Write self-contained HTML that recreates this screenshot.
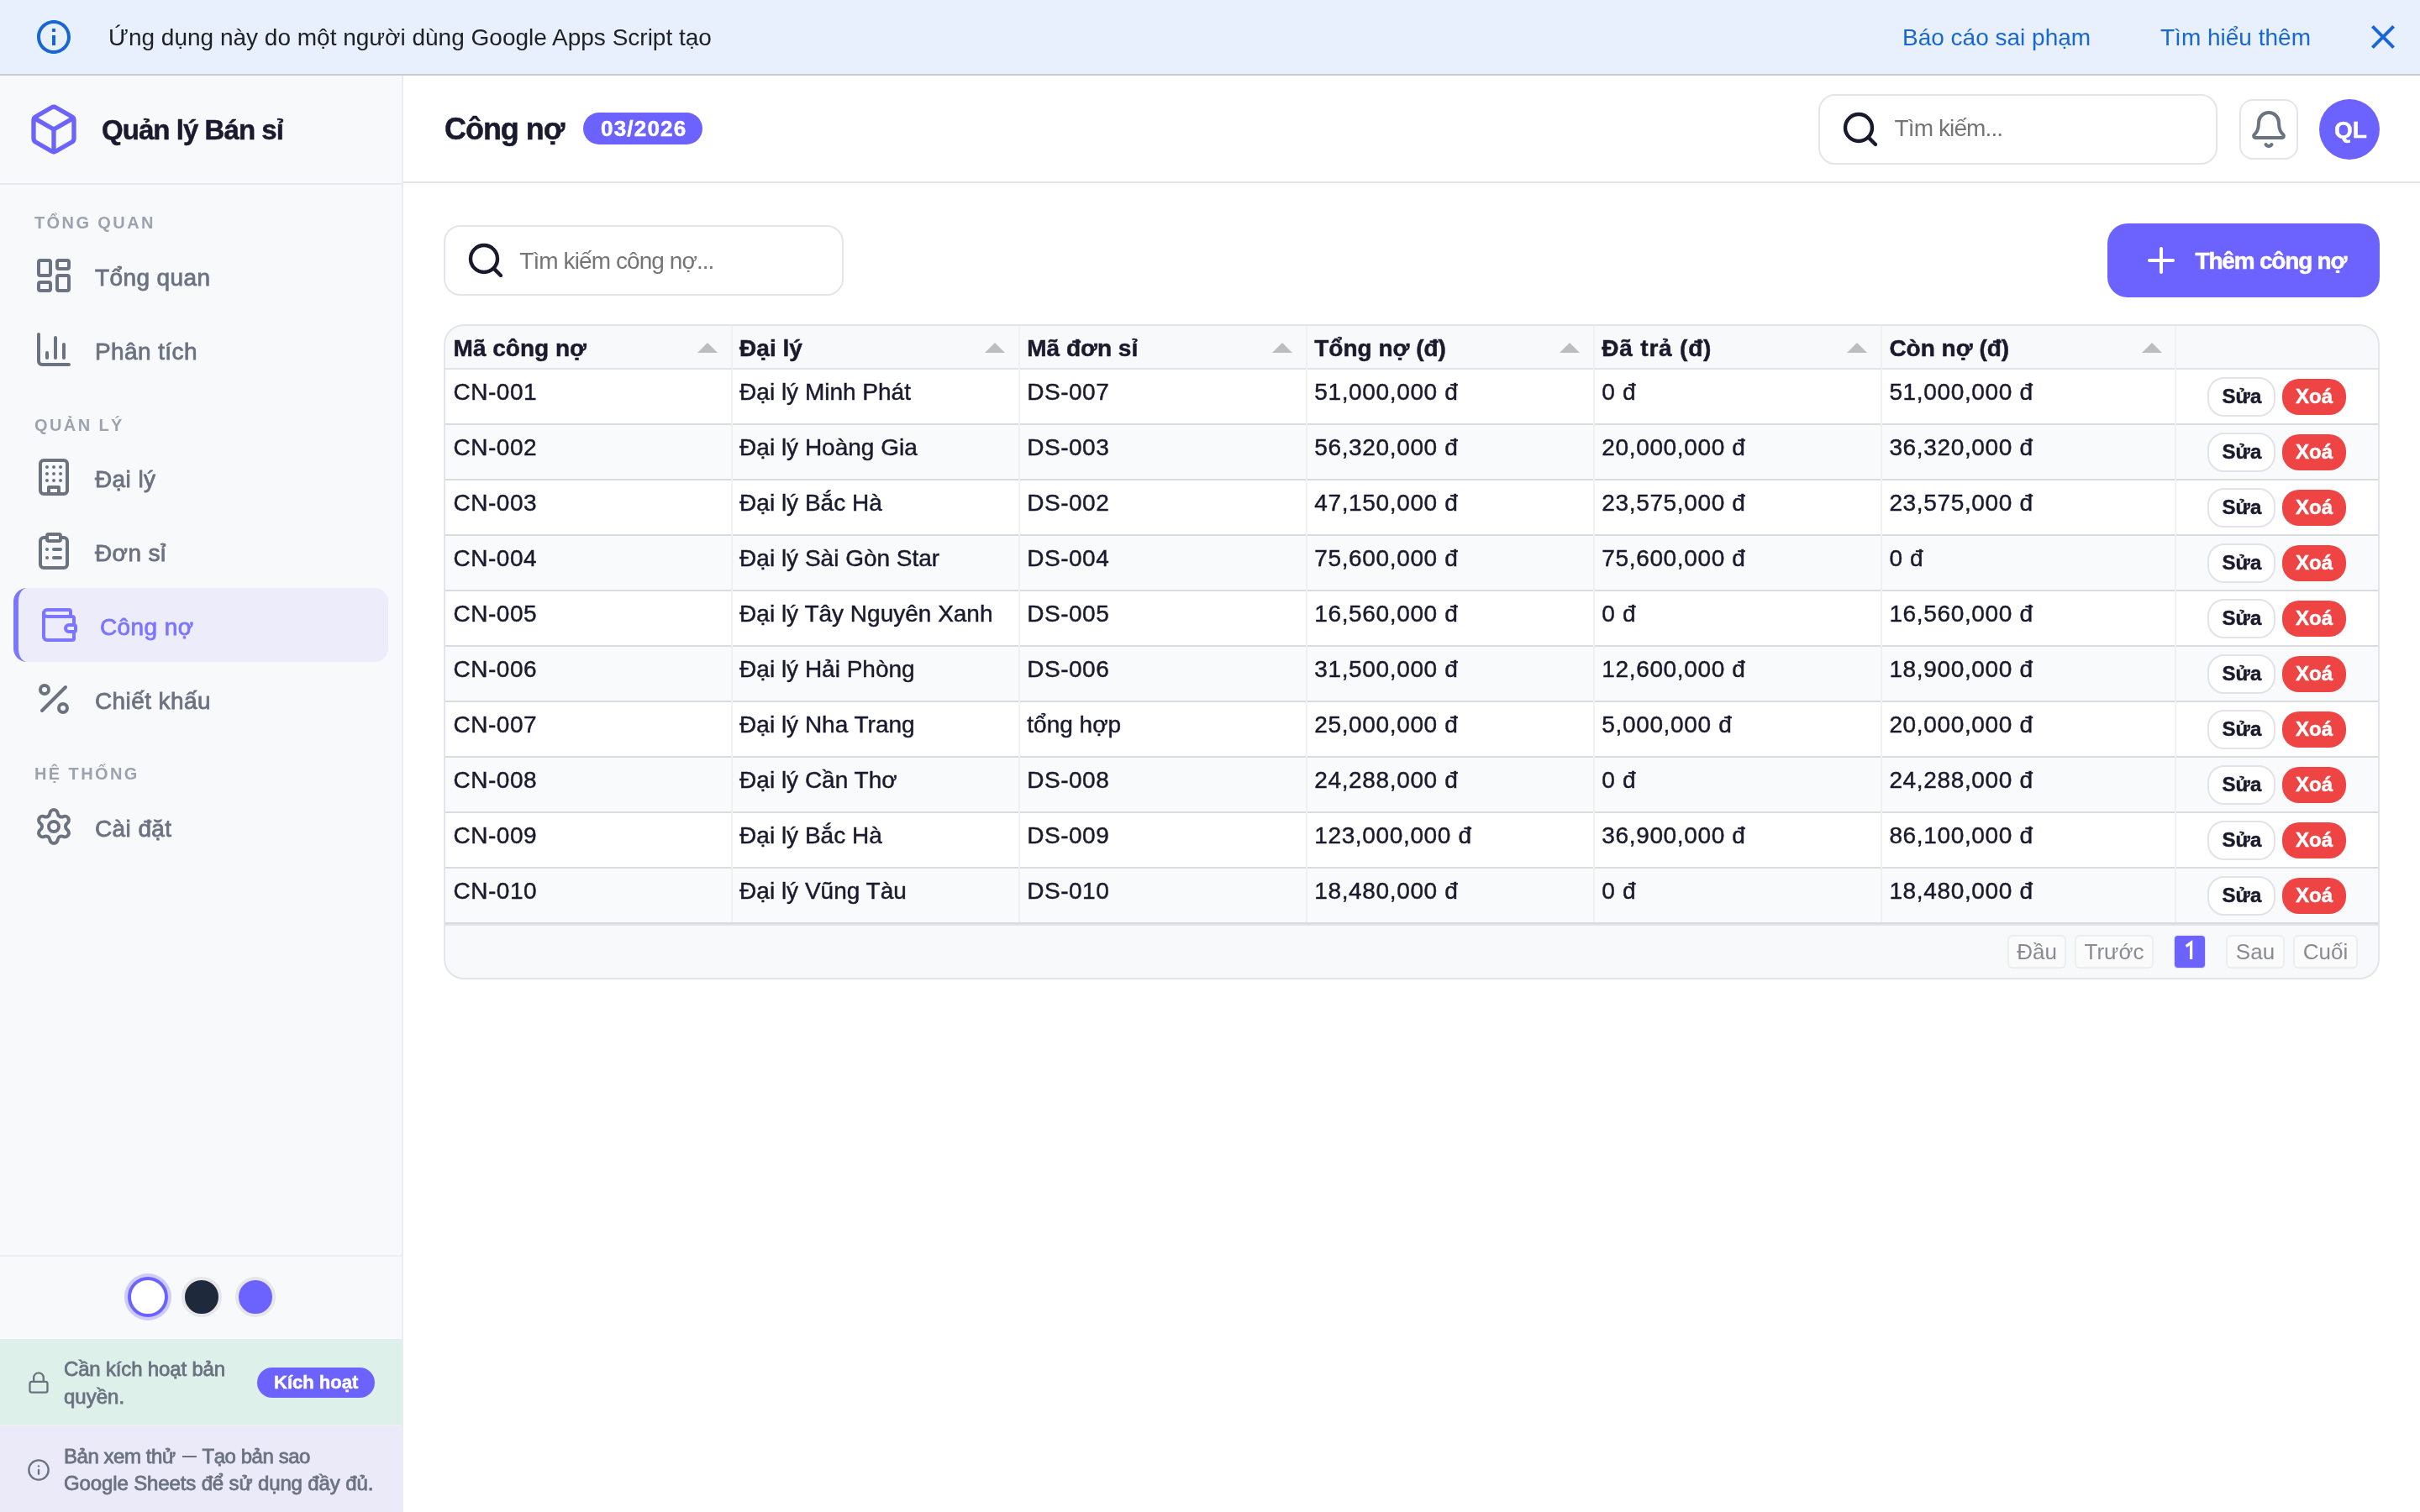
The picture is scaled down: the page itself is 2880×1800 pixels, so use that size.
<!DOCTYPE html>
<html><head><meta charset="utf-8"><title>Công nợ</title>
<style>
html,body{margin:0;padding:0;}
body{width:2880px;height:1800px;overflow:hidden;position:relative;background:#fff;font-family:"Liberation Sans",sans-serif;}
.t{position:absolute;white-space:nowrap;line-height:1;}
svg{display:block;}
#root{position:absolute;left:0;top:0;width:2880px;height:1800px;will-change:transform;}
</style></head><body><div id="root">
<div style="position:absolute;left:0px;top:0px;width:2880px;height:88px;background:#e8f0fe;border-bottom:2px solid #c9cbd0;"></div>
<svg style="position:absolute;left:40px;top:20px;" width="48" height="48" viewBox="0 0 24 24" fill="#1967d2" stroke="none" stroke-width="2" stroke-linecap="round" stroke-linejoin="round"><path d="M11 7h2v2h-2zm0 4h2v6h-2zm1-9C6.48 2 2 6.48 2 12s4.48 10 10 10 10-4.48 10-10S17.52 2 12 2zm0 18c-4.41 0-8-3.59-8-8s3.59-8 8-8 8 3.59 8 8-3.59 8-8 8z"/></svg>
<div class="t " style="left:129px;top:30.80px;font-size:28px;color:#202124;font-weight:400;letter-spacing:0px;">Ứng dụng này do một người dùng Google Apps Script tạo</div>
<div class="t " style="left:2264px;top:30.80px;font-size:28px;color:#1967d2;font-weight:400;letter-spacing:0px;">Báo cáo sai phạm</div>
<div class="t " style="left:2571px;top:30.80px;font-size:28px;color:#1967d2;font-weight:400;letter-spacing:0px;">Tìm hiểu thêm</div>
<svg style="position:absolute;left:2812px;top:20px;" width="48" height="48" viewBox="0 0 24 24" fill="#1967d2" stroke="none" stroke-width="2" stroke-linecap="round" stroke-linejoin="round"><path d="M19 6.41L17.59 5 12 10.59 6.41 5 5 6.41 10.59 12 5 17.59 6.41 19 12 13.41 17.59 19 19 17.59 13.41 12z"/></svg>
<div style="position:absolute;left:0px;top:90px;width:478px;height:1710px;background:#f8f9fb;border-right:2px solid #ebecf0;"></div>
<div style="position:absolute;left:0px;top:218px;width:478px;height:2px;background:#e8e9ee;"></div>
<svg style="position:absolute;left:32px;top:122px;" width="64" height="64" viewBox="0 0 24 24" fill="none" stroke="#6c63ff" stroke-width="2" stroke-linecap="round" stroke-linejoin="round"><path d="M21 8a2 2 0 0 0-1-1.73l-7-4a2 2 0 0 0-2 0l-7 4A2 2 0 0 0 3 8v8a2 2 0 0 0 1 1.73l7 4a2 2 0 0 0 2 0l7-4A2 2 0 0 0 21 16Z"/><path d="m3.3 7 8.7 5 8.7-5"/><path d="M12 22V12"/></svg>
<div class="t " style="left:121px;top:138.27px;font-size:33px;color:#1a1a2e;font-weight:700;letter-spacing:-0.95px;-webkit-text-stroke:0.5px currentColor;">Quản lý Bán sỉ</div>
<div class="t " style="left:41px;top:255.07px;font-size:20px;color:#9ca3af;font-weight:700;letter-spacing:2.4px;">TỔNG QUAN</div>
<svg style="position:absolute;left:40px;top:304px;" width="48" height="48" viewBox="0 0 24 24" fill="none" stroke="#6b7280" stroke-width="2" stroke-linecap="round" stroke-linejoin="round"><rect width="7" height="9" x="3" y="3" rx="1"/><rect width="7" height="5" x="14" y="3" rx="1"/><rect width="7" height="9" x="14" y="12" rx="1"/><rect width="7" height="5" x="3" y="16" rx="1"/></svg>
<div class="t " style="left:113px;top:316.80px;font-size:28px;color:#6b7280;font-weight:400;letter-spacing:0.4px;-webkit-text-stroke:0.8px currentColor;">Tổng quan</div>
<svg style="position:absolute;left:40px;top:392px;" width="48" height="48" viewBox="0 0 24 24" fill="none" stroke="#6b7280" stroke-width="2" stroke-linecap="round" stroke-linejoin="round"><path d="M3 3v16a2 2 0 0 0 2 2h16"/><path d="M18 17V9"/><path d="M13 17V5"/><path d="M8 17v-3"/></svg>
<div class="t " style="left:113px;top:404.80px;font-size:28px;color:#6b7280;font-weight:400;letter-spacing:0.4px;-webkit-text-stroke:0.8px currentColor;">Phân tích</div>
<div class="t " style="left:41px;top:495.67px;font-size:20px;color:#9ca3af;font-weight:700;letter-spacing:2.4px;">QUẢN LÝ</div>
<svg style="position:absolute;left:40px;top:544px;" width="48" height="48" viewBox="0 0 24 24" fill="none" stroke="#6b7280" stroke-width="2" stroke-linecap="round" stroke-linejoin="round"><rect width="16" height="20" x="4" y="2" rx="2" ry="2"/><path d="M9 22v-4h6v4"/><path d="M8 6h.01"/><path d="M16 6h.01"/><path d="M12 6h.01"/><path d="M12 10h.01"/><path d="M12 14h.01"/><path d="M16 10h.01"/><path d="M16 14h.01"/><path d="M8 10h.01"/><path d="M8 14h.01"/></svg>
<div class="t " style="left:113px;top:556.80px;font-size:28px;color:#6b7280;font-weight:400;letter-spacing:0.4px;-webkit-text-stroke:0.8px currentColor;">Đại lý</div>
<svg style="position:absolute;left:40px;top:632px;" width="48" height="48" viewBox="0 0 24 24" fill="none" stroke="#6b7280" stroke-width="2" stroke-linecap="round" stroke-linejoin="round"><rect width="8" height="4" x="8" y="2" rx="1" ry="1"/><path d="M16 4h2a2 2 0 0 1 2 2v14a2 2 0 0 1-2 2H6a2 2 0 0 1-2-2V6a2 2 0 0 1 2-2h2"/><path d="M12 11h4"/><path d="M12 16h4"/><path d="M8 11h.01"/><path d="M8 16h.01"/></svg>
<div class="t " style="left:113px;top:644.80px;font-size:28px;color:#6b7280;font-weight:400;letter-spacing:0.4px;-webkit-text-stroke:0.8px currentColor;">Đơn sỉ</div>
<div style="position:absolute;left:16px;top:700px;width:446px;height:88px;box-sizing:border-box;background:#edecfb;border-left:6px solid #7c77ff;border-radius:16px;"></div>
<svg style="position:absolute;left:46px;top:720px;" width="48" height="48" viewBox="0 0 24 24" fill="none" stroke="#7b75ff" stroke-width="2" stroke-linecap="round" stroke-linejoin="round"><path d="M19 7V4a1 1 0 0 0-1-1H5a2 2 0 0 0 0 4h15a1 1 0 0 1 1 1v4h-3a2 2 0 0 0 0 4h3a1 1 0 0 0 1-1v-2a1 1 0 0 0-1-1"/><path d="M3 5v14a2 2 0 0 0 2 2h15a1 1 0 0 0 1-1v-4"/></svg>
<div class="t " style="left:119px;top:732.80px;font-size:28px;color:#7b75ff;font-weight:400;letter-spacing:0.4px;-webkit-text-stroke:0.8px currentColor;">Công nợ</div>
<svg style="position:absolute;left:40px;top:808px;" width="48" height="48" viewBox="0 0 24 24" fill="none" stroke="#6b7280" stroke-width="2" stroke-linecap="round" stroke-linejoin="round"><line x1="19" x2="5" y1="5" y2="19"/><circle cx="6.5" cy="6.5" r="2.5"/><circle cx="17.5" cy="17.5" r="2.5"/></svg>
<div class="t " style="left:113px;top:820.80px;font-size:28px;color:#6b7280;font-weight:400;letter-spacing:0.4px;-webkit-text-stroke:0.8px currentColor;">Chiết khấu</div>
<div class="t " style="left:41px;top:911.07px;font-size:20px;color:#9ca3af;font-weight:700;letter-spacing:2.4px;">HỆ THỐNG</div>
<svg style="position:absolute;left:40px;top:960px;" width="48" height="48" viewBox="0 0 24 24" fill="none" stroke="#6b7280" stroke-width="2" stroke-linecap="round" stroke-linejoin="round"><path d="M9.671 4.136a2.34 2.34 0 0 1 4.659 0 2.34 2.34 0 0 0 3.319 1.915 2.34 2.34 0 0 1 2.33 4.033 2.34 2.34 0 0 0 0 3.831 2.34 2.34 0 0 1-2.33 4.033 2.34 2.34 0 0 0-3.319 1.915 2.34 2.34 0 0 1-4.659 0 2.34 2.34 0 0 0-3.32-1.915 2.34 2.34 0 0 1-2.33-4.033 2.34 2.34 0 0 0 0-3.831A2.34 2.34 0 0 1 6.35 6.051a2.34 2.34 0 0 0 3.319-1.915"/><circle cx="12" cy="12" r="3"/></svg>
<div class="t " style="left:113px;top:972.80px;font-size:28px;color:#6b7280;font-weight:400;letter-spacing:0.4px;-webkit-text-stroke:0.8px currentColor;">Cài đặt</div>
<div style="position:absolute;left:0px;top:1494px;width:478px;height:2px;background:#eceef2;"></div>
<div style="position:absolute;left:152px;top:1520px;width:40px;height:40px;border-radius:50%;background:#fff;border:4px solid #6c63ff;box-shadow:0 0 0 4px rgba(108,99,255,.3);"></div>
<div style="position:absolute;left:216px;top:1520px;width:40px;height:40px;border-radius:50%;background:#1e293b;border:4px solid #e5e7eb;"></div>
<div style="position:absolute;left:280px;top:1520px;width:40px;height:40px;border-radius:50%;background:#6c63ff;border:4px solid #e5e7eb;"></div>
<div style="position:absolute;left:0px;top:1594px;width:478px;height:102px;background:#ddf0ea;"></div>
<svg style="position:absolute;left:32px;top:1632px;" width="28" height="28" viewBox="0 0 24 24" fill="none" stroke="#6b7280" stroke-width="2" stroke-linecap="round" stroke-linejoin="round"><rect width="18" height="11" x="3" y="11" rx="2" ry="2"/><path d="M7 11V7a5 5 0 0 1 10 0v4"/></svg>
<div class="t " style="left:76px;top:1618.28px;font-size:24px;color:#6b7280;font-weight:400;letter-spacing:-0.17px;-webkit-text-stroke:0.8px currentColor;">Cần kích hoạt bản</div>
<div class="t " style="left:76px;top:1650.88px;font-size:24px;color:#6b7280;font-weight:400;letter-spacing:0px;-webkit-text-stroke:0.8px currentColor;">quyền.</div>
<div style="position:absolute;left:306px;top:1628px;width:140px;height:36px;border-radius:18px;background:#6c63ff;"></div>
<div class="t " style="left:326px;top:1635.18px;font-size:22px;color:#fff;font-weight:700;letter-spacing:0px;-webkit-text-stroke:0.5px currentColor;">Kích hoạt</div>
<div style="position:absolute;left:0px;top:1696px;width:478px;height:104px;background:#ebeaf8;"></div>
<div style="position:absolute;left:0px;top:1696px;width:478px;height:2px;background:#eff0f3;"></div>
<svg style="position:absolute;left:32px;top:1736px;" width="28" height="28" viewBox="0 0 24 24" fill="none" stroke="#6b7280" stroke-width="2" stroke-linecap="round" stroke-linejoin="round"><circle cx="12" cy="12" r="10"/><path d="M12 16v-4"/><path d="M12 8h.01"/></svg>
<div class="t " style="left:76px;top:1722.18px;font-size:24px;color:#6b7280;font-weight:400;letter-spacing:-0.45px;-webkit-text-stroke:0.8px currentColor;">Bản xem thử</div>
<div style="position:absolute;left:216.5px;top:1733.2px;width:17.5px;height:2.2px;background:#6b7280;"></div>
<div class="t " style="left:240.5px;top:1722.18px;font-size:24px;color:#6b7280;font-weight:400;letter-spacing:-0.45px;-webkit-text-stroke:0.8px currentColor;">Tạo bản sao</div>
<div class="t " style="left:76px;top:1753.88px;font-size:24px;color:#6b7280;font-weight:400;letter-spacing:-0.13px;-webkit-text-stroke:0.8px currentColor;">Google Sheets để sử dụng đầy đủ.</div>
<div style="position:absolute;left:480px;top:216px;width:2400px;height:2px;background:#e4e5ea;"></div>
<div class="t " style="left:529px;top:135.93px;font-size:36px;color:#1a1a2e;font-weight:700;letter-spacing:-1.05px;-webkit-text-stroke:0.5px currentColor;">Công nợ</div>
<div style="position:absolute;left:694px;top:134px;width:142px;height:38px;border-radius:19px;background:#6c63ff;"></div>
<div class="t " style="left:715px;top:140.29px;font-size:26px;color:#fff;font-weight:700;letter-spacing:1.2px;-webkit-text-stroke:0.5px currentColor;">03/2026</div>
<div style="position:absolute;left:2164px;top:112px;width:475px;height:84px;box-sizing:border-box;border:2px solid #e4e4ea;border-radius:20px;background:#fff;"></div>
<svg style="position:absolute;left:2190px;top:130px;" width="48" height="48" viewBox="0 0 24 24" fill="none" stroke="#1a1a2e" stroke-width="2.2" stroke-linecap="round" stroke-linejoin="round"><circle cx="11" cy="11" r="8"/><path d="m21 21-4.3-4.3"/></svg>
<div class="t " style="left:2254.6px;top:138.50px;font-size:28px;color:#757575;font-weight:400;letter-spacing:-0.9px;">Tìm kiếm...</div>
<div style="position:absolute;left:2665px;top:118px;width:70px;height:72px;box-sizing:border-box;border:2px solid #e4e4ea;border-radius:16px;background:#fff;"></div>
<svg style="position:absolute;left:2676px;top:130px;" width="48" height="48" viewBox="0 0 24 24" fill="none" stroke="#6b7280" stroke-width="2" stroke-linecap="round" stroke-linejoin="round"><path d="M10.268 21a2 2 0 0 0 3.464 0"/><path d="M3.262 15.326A1 1 0 0 0 4 17h16a1 1 0 0 0 .74-1.673C19.41 13.956 18 12.499 18 8A6 6 0 0 0 6 8c0 4.499-1.411 5.956-2.738 7.326"/></svg>
<div style="position:absolute;left:2760px;top:118px;width:72px;height:72px;border-radius:50%;background:#6c63ff;"></div>
<div class="t " style="left:2778px;top:140.50px;font-size:28px;color:#fff;font-weight:700;letter-spacing:0px;-webkit-text-stroke:0.5px currentColor;">QL</div>
<div style="position:absolute;left:528px;top:268px;width:476px;height:84px;box-sizing:border-box;border:2px solid #e4e4ea;border-radius:20px;background:#fff;"></div>
<svg style="position:absolute;left:554px;top:286px;" width="48" height="48" viewBox="0 0 24 24" fill="none" stroke="#1a1a2e" stroke-width="2.2" stroke-linecap="round" stroke-linejoin="round"><circle cx="11" cy="11" r="8"/><path d="m21 21-4.3-4.3"/></svg>
<div class="t " style="left:618.3px;top:296.60px;font-size:28px;color:#757575;font-weight:400;letter-spacing:-0.92px;">Tìm kiếm công nợ...</div>
<div style="position:absolute;left:2508px;top:266px;width:324px;height:88px;border-radius:24px;background:#6c63ff;"></div>
<svg style="position:absolute;left:2548px;top:286px;" width="48" height="48" viewBox="0 0 24 24" fill="none" stroke="#fff" stroke-width="2" stroke-linecap="round" stroke-linejoin="round"><path d="M5 12h14"/><path d="M12 5v14"/></svg>
<div class="t " style="left:2612.5px;top:296.50px;font-size:28px;color:#fff;font-weight:700;letter-spacing:-1.2px;-webkit-text-stroke:0.5px currentColor;">Thêm công nợ</div>
<div style="position:absolute;left:528px;top:386px;width:2304px;height:780px;box-sizing:border-box;border:2px solid #e4e5ea;border-radius:24px;background:#f8f9fb;overflow:hidden;">
<div style="position:absolute;left:0px;top:52px;width:2300px;height:64px;background:#ffffff;"></div>
<div style="position:absolute;left:0px;top:116px;width:2300px;height:2px;background:#dadbdd;"></div>
<div style="position:absolute;left:0px;top:118px;width:2300px;height:64px;background:#f9fafb;"></div>
<div style="position:absolute;left:0px;top:182px;width:2300px;height:2px;background:#dadbdd;"></div>
<div style="position:absolute;left:0px;top:184px;width:2300px;height:64px;background:#ffffff;"></div>
<div style="position:absolute;left:0px;top:248px;width:2300px;height:2px;background:#dadbdd;"></div>
<div style="position:absolute;left:0px;top:250px;width:2300px;height:64px;background:#f9fafb;"></div>
<div style="position:absolute;left:0px;top:314px;width:2300px;height:2px;background:#dadbdd;"></div>
<div style="position:absolute;left:0px;top:316px;width:2300px;height:64px;background:#ffffff;"></div>
<div style="position:absolute;left:0px;top:380px;width:2300px;height:2px;background:#dadbdd;"></div>
<div style="position:absolute;left:0px;top:382px;width:2300px;height:64px;background:#f9fafb;"></div>
<div style="position:absolute;left:0px;top:446px;width:2300px;height:2px;background:#dadbdd;"></div>
<div style="position:absolute;left:0px;top:448px;width:2300px;height:64px;background:#ffffff;"></div>
<div style="position:absolute;left:0px;top:512px;width:2300px;height:2px;background:#dadbdd;"></div>
<div style="position:absolute;left:0px;top:514px;width:2300px;height:64px;background:#f9fafb;"></div>
<div style="position:absolute;left:0px;top:578px;width:2300px;height:2px;background:#dadbdd;"></div>
<div style="position:absolute;left:0px;top:580px;width:2300px;height:64px;background:#ffffff;"></div>
<div style="position:absolute;left:0px;top:644px;width:2300px;height:2px;background:#dadbdd;"></div>
<div style="position:absolute;left:0px;top:646px;width:2300px;height:64px;background:#f9fafb;"></div>
<div style="position:absolute;left:0px;top:710px;width:2300px;height:2px;background:#dadbdd;"></div>
<div style="position:absolute;left:0px;top:49.5px;width:2300px;height:2px;background:#e2e3e8;"></div>
<div style="position:absolute;left:0px;top:712px;width:2300px;height:2px;background:#e2e3e8;"></div>
<div style="position:absolute;left:339.5px;top:0px;width:2px;height:710px;background:#f0f1f3;"></div>
<div style="position:absolute;left:681.7px;top:0px;width:2px;height:710px;background:#f0f1f3;"></div>
<div style="position:absolute;left:1023.5999999999999px;top:0px;width:2px;height:710px;background:#f0f1f3;"></div>
<div style="position:absolute;left:1365.7px;top:0px;width:2px;height:710px;background:#f0f1f3;"></div>
<div style="position:absolute;left:1707.8000000000002px;top:0px;width:2px;height:710px;background:#f0f1f3;"></div>
<div style="position:absolute;left:2058px;top:0px;width:2px;height:710px;background:#f0f1f3;"></div>
<div class="t" style="left:9.600000000000023px;top:12.60px;font-size:28px;color:#1a1a2e;font-weight:700;letter-spacing:0px;-webkit-text-stroke:0.5px currentColor;">Mã công nợ</div>
<div style="position:absolute;left:300.0px;top:20px;width:0;height:0;border-left:12px solid transparent;border-right:12px solid transparent;border-bottom:12px solid #bdbdbd;"></div>
<div class="t" style="left:350.1px;top:12.60px;font-size:28px;color:#1a1a2e;font-weight:700;letter-spacing:0px;-webkit-text-stroke:0.5px currentColor;">Đại lý</div>
<div style="position:absolute;left:642.2px;top:20px;width:0;height:0;border-left:12px solid transparent;border-right:12px solid transparent;border-bottom:12px solid #bdbdbd;"></div>
<div class="t" style="left:692.3px;top:12.60px;font-size:28px;color:#1a1a2e;font-weight:700;letter-spacing:0px;-webkit-text-stroke:0.5px currentColor;">Mã đơn sỉ</div>
<div style="position:absolute;left:984.0999999999999px;top:20px;width:0;height:0;border-left:12px solid transparent;border-right:12px solid transparent;border-bottom:12px solid #bdbdbd;"></div>
<div class="t" style="left:1034.1999999999998px;top:12.60px;font-size:28px;color:#1a1a2e;font-weight:700;letter-spacing:0px;-webkit-text-stroke:0.5px currentColor;">Tổng nợ (đ)</div>
<div style="position:absolute;left:1326.2px;top:20px;width:0;height:0;border-left:12px solid transparent;border-right:12px solid transparent;border-bottom:12px solid #bdbdbd;"></div>
<div class="t" style="left:1376.3px;top:12.60px;font-size:28px;color:#1a1a2e;font-weight:700;letter-spacing:0.8px;-webkit-text-stroke:0.5px currentColor;">Đã trả (đ)</div>
<div style="position:absolute;left:1668.3000000000002px;top:20px;width:0;height:0;border-left:12px solid transparent;border-right:12px solid transparent;border-bottom:12px solid #bdbdbd;"></div>
<div class="t" style="left:1718.4px;top:12.60px;font-size:28px;color:#1a1a2e;font-weight:700;letter-spacing:0px;-webkit-text-stroke:0.5px currentColor;">Còn nợ (đ)</div>
<div style="position:absolute;left:2018.5px;top:20px;width:0;height:0;border-left:12px solid transparent;border-right:12px solid transparent;border-bottom:12px solid #bdbdbd;"></div>
<div class="t" style="left:9.600000000000023px;top:65.10px;font-size:28px;color:#1a1a2e;font-weight:400;letter-spacing:0.5px;-webkit-text-stroke:0.45px currentColor;">CN-001</div>
<div class="t" style="left:350.1px;top:65.10px;font-size:28px;color:#1a1a2e;font-weight:400;letter-spacing:0px;-webkit-text-stroke:0.45px currentColor;">Đại lý Minh Phát</div>
<div class="t" style="left:692.3px;top:65.10px;font-size:28px;color:#1a1a2e;font-weight:400;letter-spacing:0.5px;-webkit-text-stroke:0.45px currentColor;">DS-007</div>
<div class="t" style="left:1034.1999999999998px;top:65.10px;font-size:28px;color:#1a1a2e;font-weight:400;letter-spacing:0.65px;-webkit-text-stroke:0.45px currentColor;">51,000,000 đ</div>
<div class="t" style="left:1376.3px;top:65.10px;font-size:28px;color:#1a1a2e;font-weight:400;letter-spacing:0.65px;-webkit-text-stroke:0.45px currentColor;">0 đ</div>
<div class="t" style="left:1718.4px;top:65.10px;font-size:28px;color:#1a1a2e;font-weight:400;letter-spacing:0.65px;-webkit-text-stroke:0.45px currentColor;">51,000,000 đ</div>
<div style="position:absolute;left:2096.5px;top:60.5px;width:81px;height:47px;box-sizing:border-box;border:2px solid #e2e3e8;border-radius:20px;background:#fff;"></div>
<div class="t" style="left:2114.6px;top:72.18px;font-size:24px;color:#1a1a2e;font-weight:700;letter-spacing:0px;-webkit-text-stroke:0.5px currentColor;">Sửa</div>
<div style="position:absolute;left:2186px;top:62.5px;width:76px;height:43px;border-radius:20px;background:#ef4444;"></div>
<div class="t" style="left:2202px;top:72.18px;font-size:24px;color:#fff;font-weight:700;letter-spacing:0px;-webkit-text-stroke:0.5px currentColor;">Xoá</div>
<div class="t" style="left:9.600000000000023px;top:131.10px;font-size:28px;color:#1a1a2e;font-weight:400;letter-spacing:0.5px;-webkit-text-stroke:0.45px currentColor;">CN-002</div>
<div class="t" style="left:350.1px;top:131.10px;font-size:28px;color:#1a1a2e;font-weight:400;letter-spacing:0px;-webkit-text-stroke:0.45px currentColor;">Đại lý Hoàng Gia</div>
<div class="t" style="left:692.3px;top:131.10px;font-size:28px;color:#1a1a2e;font-weight:400;letter-spacing:0.5px;-webkit-text-stroke:0.45px currentColor;">DS-003</div>
<div class="t" style="left:1034.1999999999998px;top:131.10px;font-size:28px;color:#1a1a2e;font-weight:400;letter-spacing:0.65px;-webkit-text-stroke:0.45px currentColor;">56,320,000 đ</div>
<div class="t" style="left:1376.3px;top:131.10px;font-size:28px;color:#1a1a2e;font-weight:400;letter-spacing:0.65px;-webkit-text-stroke:0.45px currentColor;">20,000,000 đ</div>
<div class="t" style="left:1718.4px;top:131.10px;font-size:28px;color:#1a1a2e;font-weight:400;letter-spacing:0.65px;-webkit-text-stroke:0.45px currentColor;">36,320,000 đ</div>
<div style="position:absolute;left:2096.5px;top:126.5px;width:81px;height:47px;box-sizing:border-box;border:2px solid #e2e3e8;border-radius:20px;background:#fff;"></div>
<div class="t" style="left:2114.6px;top:138.18px;font-size:24px;color:#1a1a2e;font-weight:700;letter-spacing:0px;-webkit-text-stroke:0.5px currentColor;">Sửa</div>
<div style="position:absolute;left:2186px;top:128.5px;width:76px;height:43px;border-radius:20px;background:#ef4444;"></div>
<div class="t" style="left:2202px;top:138.18px;font-size:24px;color:#fff;font-weight:700;letter-spacing:0px;-webkit-text-stroke:0.5px currentColor;">Xoá</div>
<div class="t" style="left:9.600000000000023px;top:197.10px;font-size:28px;color:#1a1a2e;font-weight:400;letter-spacing:0.5px;-webkit-text-stroke:0.45px currentColor;">CN-003</div>
<div class="t" style="left:350.1px;top:197.10px;font-size:28px;color:#1a1a2e;font-weight:400;letter-spacing:0px;-webkit-text-stroke:0.45px currentColor;">Đại lý Bắc Hà</div>
<div class="t" style="left:692.3px;top:197.10px;font-size:28px;color:#1a1a2e;font-weight:400;letter-spacing:0.5px;-webkit-text-stroke:0.45px currentColor;">DS-002</div>
<div class="t" style="left:1034.1999999999998px;top:197.10px;font-size:28px;color:#1a1a2e;font-weight:400;letter-spacing:0.65px;-webkit-text-stroke:0.45px currentColor;">47,150,000 đ</div>
<div class="t" style="left:1376.3px;top:197.10px;font-size:28px;color:#1a1a2e;font-weight:400;letter-spacing:0.65px;-webkit-text-stroke:0.45px currentColor;">23,575,000 đ</div>
<div class="t" style="left:1718.4px;top:197.10px;font-size:28px;color:#1a1a2e;font-weight:400;letter-spacing:0.65px;-webkit-text-stroke:0.45px currentColor;">23,575,000 đ</div>
<div style="position:absolute;left:2096.5px;top:192.5px;width:81px;height:47px;box-sizing:border-box;border:2px solid #e2e3e8;border-radius:20px;background:#fff;"></div>
<div class="t" style="left:2114.6px;top:204.18px;font-size:24px;color:#1a1a2e;font-weight:700;letter-spacing:0px;-webkit-text-stroke:0.5px currentColor;">Sửa</div>
<div style="position:absolute;left:2186px;top:194.5px;width:76px;height:43px;border-radius:20px;background:#ef4444;"></div>
<div class="t" style="left:2202px;top:204.18px;font-size:24px;color:#fff;font-weight:700;letter-spacing:0px;-webkit-text-stroke:0.5px currentColor;">Xoá</div>
<div class="t" style="left:9.600000000000023px;top:263.10px;font-size:28px;color:#1a1a2e;font-weight:400;letter-spacing:0.5px;-webkit-text-stroke:0.45px currentColor;">CN-004</div>
<div class="t" style="left:350.1px;top:263.10px;font-size:28px;color:#1a1a2e;font-weight:400;letter-spacing:0px;-webkit-text-stroke:0.45px currentColor;">Đại lý Sài Gòn Star</div>
<div class="t" style="left:692.3px;top:263.10px;font-size:28px;color:#1a1a2e;font-weight:400;letter-spacing:0.5px;-webkit-text-stroke:0.45px currentColor;">DS-004</div>
<div class="t" style="left:1034.1999999999998px;top:263.10px;font-size:28px;color:#1a1a2e;font-weight:400;letter-spacing:0.65px;-webkit-text-stroke:0.45px currentColor;">75,600,000 đ</div>
<div class="t" style="left:1376.3px;top:263.10px;font-size:28px;color:#1a1a2e;font-weight:400;letter-spacing:0.65px;-webkit-text-stroke:0.45px currentColor;">75,600,000 đ</div>
<div class="t" style="left:1718.4px;top:263.10px;font-size:28px;color:#1a1a2e;font-weight:400;letter-spacing:0.65px;-webkit-text-stroke:0.45px currentColor;">0 đ</div>
<div style="position:absolute;left:2096.5px;top:258.5px;width:81px;height:47px;box-sizing:border-box;border:2px solid #e2e3e8;border-radius:20px;background:#fff;"></div>
<div class="t" style="left:2114.6px;top:270.18px;font-size:24px;color:#1a1a2e;font-weight:700;letter-spacing:0px;-webkit-text-stroke:0.5px currentColor;">Sửa</div>
<div style="position:absolute;left:2186px;top:260.5px;width:76px;height:43px;border-radius:20px;background:#ef4444;"></div>
<div class="t" style="left:2202px;top:270.18px;font-size:24px;color:#fff;font-weight:700;letter-spacing:0px;-webkit-text-stroke:0.5px currentColor;">Xoá</div>
<div class="t" style="left:9.600000000000023px;top:329.10px;font-size:28px;color:#1a1a2e;font-weight:400;letter-spacing:0.5px;-webkit-text-stroke:0.45px currentColor;">CN-005</div>
<div class="t" style="left:350.1px;top:329.10px;font-size:28px;color:#1a1a2e;font-weight:400;letter-spacing:0px;-webkit-text-stroke:0.45px currentColor;">Đại lý Tây Nguyên Xanh</div>
<div class="t" style="left:692.3px;top:329.10px;font-size:28px;color:#1a1a2e;font-weight:400;letter-spacing:0.5px;-webkit-text-stroke:0.45px currentColor;">DS-005</div>
<div class="t" style="left:1034.1999999999998px;top:329.10px;font-size:28px;color:#1a1a2e;font-weight:400;letter-spacing:0.65px;-webkit-text-stroke:0.45px currentColor;">16,560,000 đ</div>
<div class="t" style="left:1376.3px;top:329.10px;font-size:28px;color:#1a1a2e;font-weight:400;letter-spacing:0.65px;-webkit-text-stroke:0.45px currentColor;">0 đ</div>
<div class="t" style="left:1718.4px;top:329.10px;font-size:28px;color:#1a1a2e;font-weight:400;letter-spacing:0.65px;-webkit-text-stroke:0.45px currentColor;">16,560,000 đ</div>
<div style="position:absolute;left:2096.5px;top:324.5px;width:81px;height:47px;box-sizing:border-box;border:2px solid #e2e3e8;border-radius:20px;background:#fff;"></div>
<div class="t" style="left:2114.6px;top:336.18px;font-size:24px;color:#1a1a2e;font-weight:700;letter-spacing:0px;-webkit-text-stroke:0.5px currentColor;">Sửa</div>
<div style="position:absolute;left:2186px;top:326.5px;width:76px;height:43px;border-radius:20px;background:#ef4444;"></div>
<div class="t" style="left:2202px;top:336.18px;font-size:24px;color:#fff;font-weight:700;letter-spacing:0px;-webkit-text-stroke:0.5px currentColor;">Xoá</div>
<div class="t" style="left:9.600000000000023px;top:395.10px;font-size:28px;color:#1a1a2e;font-weight:400;letter-spacing:0.5px;-webkit-text-stroke:0.45px currentColor;">CN-006</div>
<div class="t" style="left:350.1px;top:395.10px;font-size:28px;color:#1a1a2e;font-weight:400;letter-spacing:0px;-webkit-text-stroke:0.45px currentColor;">Đại lý Hải Phòng</div>
<div class="t" style="left:692.3px;top:395.10px;font-size:28px;color:#1a1a2e;font-weight:400;letter-spacing:0.5px;-webkit-text-stroke:0.45px currentColor;">DS-006</div>
<div class="t" style="left:1034.1999999999998px;top:395.10px;font-size:28px;color:#1a1a2e;font-weight:400;letter-spacing:0.65px;-webkit-text-stroke:0.45px currentColor;">31,500,000 đ</div>
<div class="t" style="left:1376.3px;top:395.10px;font-size:28px;color:#1a1a2e;font-weight:400;letter-spacing:0.65px;-webkit-text-stroke:0.45px currentColor;">12,600,000 đ</div>
<div class="t" style="left:1718.4px;top:395.10px;font-size:28px;color:#1a1a2e;font-weight:400;letter-spacing:0.65px;-webkit-text-stroke:0.45px currentColor;">18,900,000 đ</div>
<div style="position:absolute;left:2096.5px;top:390.5px;width:81px;height:47px;box-sizing:border-box;border:2px solid #e2e3e8;border-radius:20px;background:#fff;"></div>
<div class="t" style="left:2114.6px;top:402.18px;font-size:24px;color:#1a1a2e;font-weight:700;letter-spacing:0px;-webkit-text-stroke:0.5px currentColor;">Sửa</div>
<div style="position:absolute;left:2186px;top:392.5px;width:76px;height:43px;border-radius:20px;background:#ef4444;"></div>
<div class="t" style="left:2202px;top:402.18px;font-size:24px;color:#fff;font-weight:700;letter-spacing:0px;-webkit-text-stroke:0.5px currentColor;">Xoá</div>
<div class="t" style="left:9.600000000000023px;top:461.10px;font-size:28px;color:#1a1a2e;font-weight:400;letter-spacing:0.5px;-webkit-text-stroke:0.45px currentColor;">CN-007</div>
<div class="t" style="left:350.1px;top:461.10px;font-size:28px;color:#1a1a2e;font-weight:400;letter-spacing:0px;-webkit-text-stroke:0.45px currentColor;">Đại lý Nha Trang</div>
<div class="t" style="left:692.3px;top:461.10px;font-size:28px;color:#1a1a2e;font-weight:400;letter-spacing:0px;-webkit-text-stroke:0.45px currentColor;">tổng hợp</div>
<div class="t" style="left:1034.1999999999998px;top:461.10px;font-size:28px;color:#1a1a2e;font-weight:400;letter-spacing:0.65px;-webkit-text-stroke:0.45px currentColor;">25,000,000 đ</div>
<div class="t" style="left:1376.3px;top:461.10px;font-size:28px;color:#1a1a2e;font-weight:400;letter-spacing:0.65px;-webkit-text-stroke:0.45px currentColor;">5,000,000 đ</div>
<div class="t" style="left:1718.4px;top:461.10px;font-size:28px;color:#1a1a2e;font-weight:400;letter-spacing:0.65px;-webkit-text-stroke:0.45px currentColor;">20,000,000 đ</div>
<div style="position:absolute;left:2096.5px;top:456.5px;width:81px;height:47px;box-sizing:border-box;border:2px solid #e2e3e8;border-radius:20px;background:#fff;"></div>
<div class="t" style="left:2114.6px;top:468.18px;font-size:24px;color:#1a1a2e;font-weight:700;letter-spacing:0px;-webkit-text-stroke:0.5px currentColor;">Sửa</div>
<div style="position:absolute;left:2186px;top:458.5px;width:76px;height:43px;border-radius:20px;background:#ef4444;"></div>
<div class="t" style="left:2202px;top:468.18px;font-size:24px;color:#fff;font-weight:700;letter-spacing:0px;-webkit-text-stroke:0.5px currentColor;">Xoá</div>
<div class="t" style="left:9.600000000000023px;top:527.10px;font-size:28px;color:#1a1a2e;font-weight:400;letter-spacing:0.5px;-webkit-text-stroke:0.45px currentColor;">CN-008</div>
<div class="t" style="left:350.1px;top:527.10px;font-size:28px;color:#1a1a2e;font-weight:400;letter-spacing:0px;-webkit-text-stroke:0.45px currentColor;">Đại lý Cần Thơ</div>
<div class="t" style="left:692.3px;top:527.10px;font-size:28px;color:#1a1a2e;font-weight:400;letter-spacing:0.5px;-webkit-text-stroke:0.45px currentColor;">DS-008</div>
<div class="t" style="left:1034.1999999999998px;top:527.10px;font-size:28px;color:#1a1a2e;font-weight:400;letter-spacing:0.65px;-webkit-text-stroke:0.45px currentColor;">24,288,000 đ</div>
<div class="t" style="left:1376.3px;top:527.10px;font-size:28px;color:#1a1a2e;font-weight:400;letter-spacing:0.65px;-webkit-text-stroke:0.45px currentColor;">0 đ</div>
<div class="t" style="left:1718.4px;top:527.10px;font-size:28px;color:#1a1a2e;font-weight:400;letter-spacing:0.65px;-webkit-text-stroke:0.45px currentColor;">24,288,000 đ</div>
<div style="position:absolute;left:2096.5px;top:522.5px;width:81px;height:47px;box-sizing:border-box;border:2px solid #e2e3e8;border-radius:20px;background:#fff;"></div>
<div class="t" style="left:2114.6px;top:534.18px;font-size:24px;color:#1a1a2e;font-weight:700;letter-spacing:0px;-webkit-text-stroke:0.5px currentColor;">Sửa</div>
<div style="position:absolute;left:2186px;top:524.5px;width:76px;height:43px;border-radius:20px;background:#ef4444;"></div>
<div class="t" style="left:2202px;top:534.18px;font-size:24px;color:#fff;font-weight:700;letter-spacing:0px;-webkit-text-stroke:0.5px currentColor;">Xoá</div>
<div class="t" style="left:9.600000000000023px;top:593.10px;font-size:28px;color:#1a1a2e;font-weight:400;letter-spacing:0.5px;-webkit-text-stroke:0.45px currentColor;">CN-009</div>
<div class="t" style="left:350.1px;top:593.10px;font-size:28px;color:#1a1a2e;font-weight:400;letter-spacing:0px;-webkit-text-stroke:0.45px currentColor;">Đại lý Bắc Hà</div>
<div class="t" style="left:692.3px;top:593.10px;font-size:28px;color:#1a1a2e;font-weight:400;letter-spacing:0.5px;-webkit-text-stroke:0.45px currentColor;">DS-009</div>
<div class="t" style="left:1034.1999999999998px;top:593.10px;font-size:28px;color:#1a1a2e;font-weight:400;letter-spacing:0.65px;-webkit-text-stroke:0.45px currentColor;">123,000,000 đ</div>
<div class="t" style="left:1376.3px;top:593.10px;font-size:28px;color:#1a1a2e;font-weight:400;letter-spacing:0.65px;-webkit-text-stroke:0.45px currentColor;">36,900,000 đ</div>
<div class="t" style="left:1718.4px;top:593.10px;font-size:28px;color:#1a1a2e;font-weight:400;letter-spacing:0.65px;-webkit-text-stroke:0.45px currentColor;">86,100,000 đ</div>
<div style="position:absolute;left:2096.5px;top:588.5px;width:81px;height:47px;box-sizing:border-box;border:2px solid #e2e3e8;border-radius:20px;background:#fff;"></div>
<div class="t" style="left:2114.6px;top:600.18px;font-size:24px;color:#1a1a2e;font-weight:700;letter-spacing:0px;-webkit-text-stroke:0.5px currentColor;">Sửa</div>
<div style="position:absolute;left:2186px;top:590.5px;width:76px;height:43px;border-radius:20px;background:#ef4444;"></div>
<div class="t" style="left:2202px;top:600.18px;font-size:24px;color:#fff;font-weight:700;letter-spacing:0px;-webkit-text-stroke:0.5px currentColor;">Xoá</div>
<div class="t" style="left:9.600000000000023px;top:659.10px;font-size:28px;color:#1a1a2e;font-weight:400;letter-spacing:0.5px;-webkit-text-stroke:0.45px currentColor;">CN-010</div>
<div class="t" style="left:350.1px;top:659.10px;font-size:28px;color:#1a1a2e;font-weight:400;letter-spacing:0px;-webkit-text-stroke:0.45px currentColor;">Đại lý Vũng Tàu</div>
<div class="t" style="left:692.3px;top:659.10px;font-size:28px;color:#1a1a2e;font-weight:400;letter-spacing:0.5px;-webkit-text-stroke:0.45px currentColor;">DS-010</div>
<div class="t" style="left:1034.1999999999998px;top:659.10px;font-size:28px;color:#1a1a2e;font-weight:400;letter-spacing:0.65px;-webkit-text-stroke:0.45px currentColor;">18,480,000 đ</div>
<div class="t" style="left:1376.3px;top:659.10px;font-size:28px;color:#1a1a2e;font-weight:400;letter-spacing:0.65px;-webkit-text-stroke:0.45px currentColor;">0 đ</div>
<div class="t" style="left:1718.4px;top:659.10px;font-size:28px;color:#1a1a2e;font-weight:400;letter-spacing:0.65px;-webkit-text-stroke:0.45px currentColor;">18,480,000 đ</div>
<div style="position:absolute;left:2096.5px;top:654.5px;width:81px;height:47px;box-sizing:border-box;border:2px solid #e2e3e8;border-radius:20px;background:#fff;"></div>
<div class="t" style="left:2114.6px;top:666.18px;font-size:24px;color:#1a1a2e;font-weight:700;letter-spacing:0px;-webkit-text-stroke:0.5px currentColor;">Sửa</div>
<div style="position:absolute;left:2186px;top:656.5px;width:76px;height:43px;border-radius:20px;background:#ef4444;"></div>
<div class="t" style="left:2202px;top:666.18px;font-size:24px;color:#fff;font-weight:700;letter-spacing:0px;-webkit-text-stroke:0.5px currentColor;">Xoá</div>
<div style="position:absolute;left:1859px;top:725px;width:70px;height:40px;box-sizing:border-box;border:2px solid #eceded;border-radius:6px;background:#fbfbfb;"></div>
<div class="t" style="left:1859px;top:731.99px;width:70px;text-align:center;font-size:26px;color:#8a8a96;">Đầu</div>
<div style="position:absolute;left:1939px;top:725px;width:94px;height:40px;box-sizing:border-box;border:2px solid #eceded;border-radius:6px;background:#fbfbfb;"></div>
<div class="t" style="left:1939px;top:731.99px;width:94px;text-align:center;font-size:26px;color:#8a8a96;">Trước</div>
<div style="position:absolute;left:2119px;top:725px;width:70px;height:40px;box-sizing:border-box;border:2px solid #eceded;border-radius:6px;background:#fbfbfb;"></div>
<div class="t" style="left:2119px;top:731.99px;width:70px;text-align:center;font-size:26px;color:#8a8a96;">Sau</div>
<div style="position:absolute;left:2199px;top:725px;width:77px;height:40px;box-sizing:border-box;border:2px solid #eceded;border-radius:6px;background:#fbfbfb;"></div>
<div class="t" style="left:2199px;top:731.99px;width:77px;text-align:center;font-size:26px;color:#8a8a96;">Cuối</div>
<div style="position:absolute;left:2058px;top:726px;width:36px;height:38px;border-radius:4px;background:#6c63ff;box-shadow:0 0 0 1.2px #e4e6e2;"></div>
<svg style="position:absolute;left:2060px;top:730px" width="30" height="30" viewBox="0 0 30 30"><path d="M11.6 8.6 L17.6 4.2 L17.6 24" fill="none" stroke="#fff" stroke-width="3.3" stroke-linejoin="miter"/></svg>
</div>
</div></body></html>
